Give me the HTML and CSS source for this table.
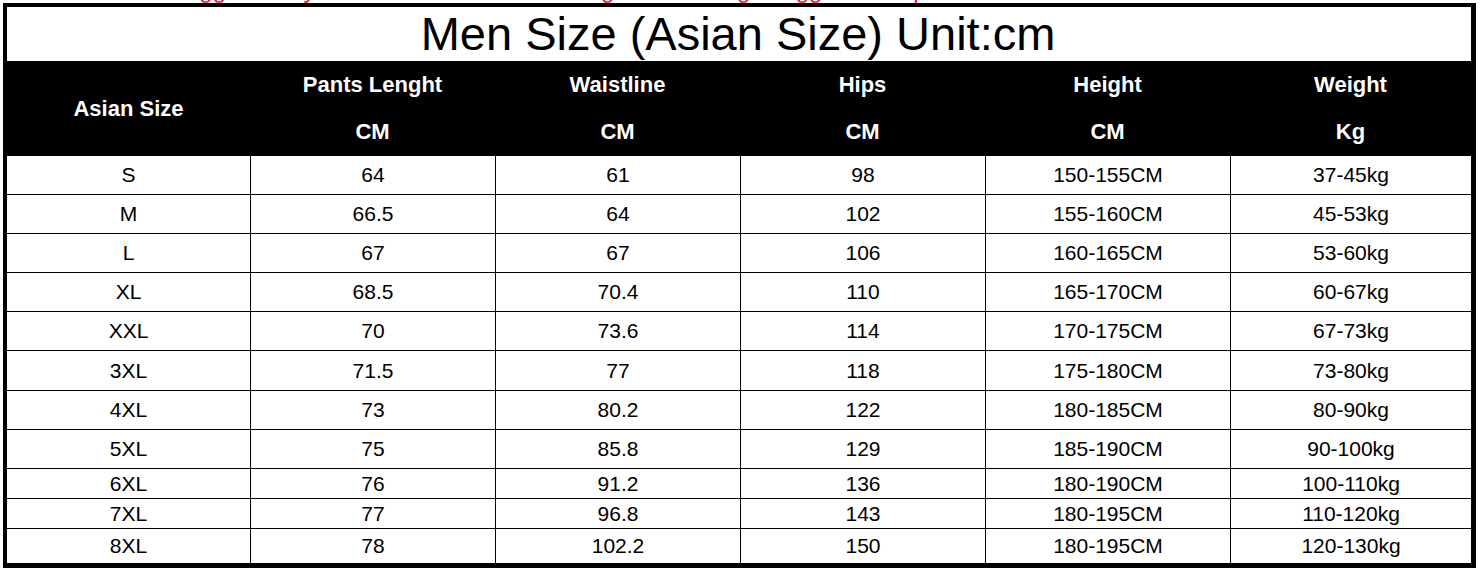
FILE: index.html
```html
<!DOCTYPE html>
<html lang="en">
<head>
<meta charset="utf-8">
<title>Men Size (Asian Size)</title>
<link rel="stylesheet" href="styles.css">
</head>
<body>
<div class="note"><div class="note-text">Suggestion: you should choose according to their weight bigger size up</div></div>
<div class="chart">
  <div class="title">Men Size (Asian Size) Unit:cm</div>
  <div class="head">
    <div class="h-span">Asian Size</div>
    <div class="h">Pants Lenght</div>
    <div class="h">Waistline</div>
    <div class="h">Hips</div>
    <div class="h">Height</div>
    <div class="h">Weight</div>
    <div class="h">CM</div>
    <div class="h">CM</div>
    <div class="h">CM</div>
    <div class="h">CM</div>
    <div class="h">Kg</div>
  </div>
  <div class="row r38 first"><div>S</div><div>64</div><div>61</div><div>98</div><div>150-155CM</div><div>37-45kg</div></div>
  <div class="row r38"><div>M</div><div>66.5</div><div>64</div><div>102</div><div>155-160CM</div><div>45-53kg</div></div>
  <div class="row r38"><div>L</div><div>67</div><div>67</div><div>106</div><div>160-165CM</div><div>53-60kg</div></div>
  <div class="row r38"><div>XL</div><div>68.5</div><div>70.4</div><div>110</div><div>165-170CM</div><div>60-67kg</div></div>
  <div class="row r38"><div>XXL</div><div>70</div><div>73.6</div><div>114</div><div>170-175CM</div><div>67-73kg</div></div>
  <div class="row r39"><div>3XL</div><div>71.5</div><div>77</div><div>118</div><div>175-180CM</div><div>73-80kg</div></div>
  <div class="row r38"><div>4XL</div><div>73</div><div>80.2</div><div>122</div><div>180-185CM</div><div>80-90kg</div></div>
  <div class="row r38"><div>5XL</div><div>75</div><div>85.8</div><div>129</div><div>185-190CM</div><div>90-100kg</div></div>
  <div class="row r29"><div>6XL</div><div>76</div><div>91.2</div><div>136</div><div>180-190CM</div><div>100-110kg</div></div>
  <div class="row r29"><div>7XL</div><div>77</div><div>96.8</div><div>143</div><div>180-195CM</div><div>110-120kg</div></div>
  <div class="row r34"><div>8XL</div><div>78</div><div>102.2</div><div>150</div><div>180-195CM</div><div>120-130kg</div></div>
</div>
</body>
</html>
```
FILE: styles.css
```css
* { box-sizing: border-box; }
html, body { margin: 0; padding: 0; background: #fff; }
body { font-family: "Liberation Sans", Arial, sans-serif; color: #000; }

.note {
  height: 3px;
  overflow: hidden;
}
.note-text {
  margin-top: -24px;
  padding-left: 170px;
  font-size: 24px;
  line-height: 27px;
  color: #e0243f;
  white-space: nowrap;
}

.chart {
  margin-left: 3px;
  width: 1473px;
  border: 4px solid #000;
  border-right-width: 5px;
  border-bottom-width: 5px;
}

.title {
  height: 54px;
  line-height: 54px;
  font-size: 47px;
  text-align: center;
  padding-right: 2px;
}

.head {
  display: grid;
  grid-template-columns: 243px 245px 245px 245px 245px 1fr;
  grid-template-rows: 47px 48px;
  background: #000;
  color: #fff;
  font-weight: bold;
  font-size: 22px;
}
.head > div {
  display: flex;
  align-items: center;
  justify-content: center;
}
.h-span { grid-row: 1 / span 2; padding-top: 1px; }

.row {
  display: grid;
  grid-template-columns: 243px 245px 245px 245px 245px 1fr;
  border-top: 1px solid #000;
  font-size: 21px;
}
.row.first { border-top: 0; }
.row > div {
  display: flex;
  align-items: center;
  justify-content: center;
  border-left: 1px solid #000;
}
.row > div:first-child { border-left: 0; }
.r38 { height: 39px; }
.row.first.r38 { height: 38px; }
.r39 { height: 40px; }
.r29 { height: 30px; }
.r34 { height: 35px; }
```
